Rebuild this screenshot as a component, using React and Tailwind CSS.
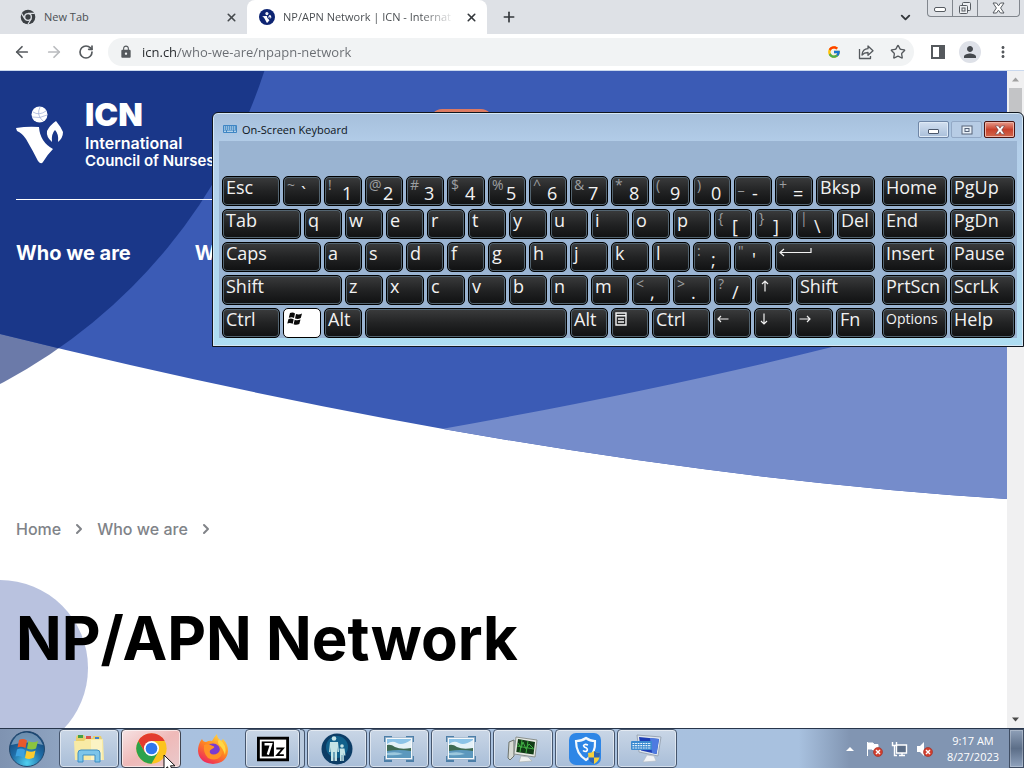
import React from "react";
import { ArrowLeft, ArrowRight, ChevronDown, ChevronRight, Plus, RotateCw, Star, X } from "lucide-react";
import { MdLock, MdPerson, MdMoreVert } from "react-icons/md";
import { FcGoogle } from "react-icons/fc";

/* ---------- Browser chrome ---------- */

function ChromeMark({ className }) {
  return (
    <svg viewBox="0 0 48 48" className={className} aria-hidden="true">
      <circle cx="24" cy="24" r="22" fill="#fcc31e" />
      <path d="M24 24 L4.9 13 A22 22 0 0 1 43.1 13 L24 13 Z" fill="#e33b2e" />
      <path d="M4.9 13 A22 22 0 0 0 24 46 L33.5 29.5 L24 24 L14.5 29.5 Z" fill="#2ba24c" />
      <path d="M4.9 13 L14.5 29.5 L24 24 L24 13 Z" fill="#e33b2e" />
      <circle cx="24" cy="24" r="11" fill="#fff" />
      <circle cx="24" cy="24" r="8.5" fill="#2f77ee" />
    </svg>
  );
}

function ChromeMono({ className }) {
  return (
    <svg viewBox="0 0 48 48" className={className} aria-hidden="true">
      <circle cx="24" cy="24" r="22" fill="#3c4044" />
      <path d="M24 13H44M14.500 29.500 4.500 13M33.500 29.500 24 46" stroke="#dee1e6" strokeWidth="3.500" />
      <circle cx="24" cy="24" r="12" fill="#dee1e6" />
      <circle cx="24" cy="24" r="8" fill="#3c4044" />
    </svg>
  );
}

function IcnMark({ className }) {
  return (
    <svg viewBox="0 0 48 58" className={className} aria-hidden="true">
      <circle cx="23.500" cy="8.500" r="8" fill="#fff" />
      <path d="M17 6 Q23 10 30 5 M24 1 Q20 9 27 15 M16 11 Q24 13 31 9" fill="none" stroke="#9aa9d4" strokeWidth=".7" />
      <path d="M0 22 Q12 20 23 21 Q24 36 37 43 Q31 49 27 56 Q25 59 22 55 Q17 45 10 33 Q6 27 1 25 Z" fill="#fff" />
      <path d="M40 15 Q45 21 47 26 Q47 32 42 36 Q43 28 39 24 Q35 28 36 36 Q30 31 31 25 Q34 19 40 15 Z" fill="#fff" />
    </svg>
  );
}

function TabStrip() {
  return (
    <div className="flex h-[34px] shrink-0 bg-[#dee1e6] text-xs">
      <div className="flex w-[247px] items-center pr-2 pl-5">
        <ChromeMono className="size-4" />
        <span className="ml-2 flex-1 text-[11px] text-[#4b4f54]">New Tab</span>
        <button aria-label="Close New Tab" className="flex size-4 items-center justify-center text-[#45494d]">
          <X size={13} strokeWidth={3} />
        </button>
      </div>
      <div className="flex w-[240px] items-center rounded-t-lg bg-white pr-2 pl-3">
        <span className="flex size-4 items-center justify-center rounded-full bg-[#0d2472]">
          <IcnMark className="h-[11px] w-[10px]" />
        </span>
        <span className="ml-2 flex-1 overflow-hidden bg-linear-[90deg,#45494d_80%,#ffffff_100%] bg-clip-text text-[11px] whitespace-nowrap text-transparent">
          NP/APN Network | ICN - Internat
        </span>
        <button aria-label="Close NP/APN Network" className="ml-2 flex size-4 items-center justify-center text-[#33373b]">
          <X size={13} strokeWidth={3} />
        </button>
      </div>
      <button aria-label="New tab" className="ml-3 flex w-5 items-center justify-center text-[#33373b]">
        <Plus size={16} strokeWidth={2.500} />
      </button>
      <button aria-label="Search tabs" className="mr-3 ml-auto flex w-5 items-center justify-center text-[#33373b]">
        <ChevronDown size={15} strokeWidth={3} />
      </button>
      <div className="mr-1 flex h-[17px] w-[93px] overflow-hidden rounded-b border border-t-0 border-[#81868d] text-[#565b61]">
        <button aria-label="Minimize" className="flex w-[25px] items-center justify-center border-r border-[#81868d]">
          <svg viewBox="0 0 14 12" className="h-3 w-[14px]" fill="#fff" stroke="currentColor"><rect x="1.500" y="5.500" width="11" height="4" rx="1.500" /></svg>
        </button>
        <button aria-label="Restore" className="flex w-[25px] items-center justify-center border-r border-[#81868d]">
          <svg viewBox="0 0 14 14" className="size-[14px]" fill="#eef0f3" stroke="currentColor"><rect x="4.500" y="1.500" width="8" height="8" rx="1" /><rect x="1.500" y="4.500" width="8" height="8" rx="1" /><rect x="4" y="7" width="3" height="3" /></svg>
        </button>
        <button aria-label="Close window" className="flex flex-1 items-center justify-center">
          <svg viewBox="0 0 13 12" className="h-3 w-[13px]" fill="#fff" stroke="currentColor"><path d="M1 1h3.500l2 2.800 2-2.800H12L8.600 6 12 11H8.500l-2-2.800-2 2.800H1L4.400 6Z" /></svg>
        </button>
      </div>
    </div>
  );
}

function Toolbar() {
  return (
    <div className="flex h-[37px] shrink-0 items-center border-b border-[#c9d8ee] bg-white pr-3 pl-3 text-[#55595d]">
      <button aria-label="Back" className="flex size-5 items-center justify-center"><ArrowLeft size={18} strokeWidth={2.300} /></button>
      <button aria-label="Forward" className="ml-3 flex size-5 items-center justify-center text-[#b9bbbe]"><ArrowRight size={18} strokeWidth={2.300} /></button>
      <button aria-label="Reload" className="ml-3 flex size-5 items-center justify-center"><RotateCw size={16} strokeWidth={2.500} /></button>
      <div className="ml-3 flex h-7 flex-1 items-center rounded-full bg-[#f1f3f4] pr-2 pl-[11px]">
        <MdLock size={14} />
        <input
          aria-label="Address"
          defaultValue="icn.ch/who-we-are/npapn-network"
          className="ml-[9px] min-w-0 flex-1 bg-linear-[90deg,#25282c_36px,#676b70_36px] bg-clip-text pt-[2px] text-[13px] text-transparent outline-none"
        />
        <button aria-label="Search with Google"><FcGoogle size={14} /></button>
        <button aria-label="Share" className="ml-4">
          <svg viewBox="0 0 18 18" className="size-[18px]" fill="none" stroke="currentColor" strokeWidth="1.300" strokeLinejoin="round">
            <path d="M2.500 6v9.500h11V13M5 12c.4-4.300 2.800-6.200 6-6.300V3l5 4.700-5 4.600V9.500C8.500 9.500 6.500 10.200 5 12Z" />
          </svg>
        </button>
        <button aria-label="Bookmark" className="ml-[15px]"><Star size={16} /></button>
      </div>
      <button aria-label="Side panel" className="ml-4">
        <svg viewBox="0 0 16 16" className="size-4"><path d="M1 1h14v14H1Z M3 3v10h6V3Z" fillRule="evenodd" fill="currentColor" /></svg>
      </button>
      <button aria-label="Profile" className="ml-[13px] flex size-[22px] items-center justify-center rounded-full bg-[#dee1e8] text-[#45494e]"><MdPerson size={18} /></button>
      <button aria-label="Menu" className="ml-[13px]"><MdMoreVert size={18} /></button>
    </div>
  );
}

/* ---------- Web page ---------- */

function Backdrop() {
  return (
    <svg viewBox="0 0 1007 657" preserveAspectRatio="none" className="absolute inset-0 size-full" aria-hidden="true">
      <defs>
        <clipPath id="hero"><path d="M0 0H1007V428Q545 398 0 263Z" /></clipPath>
      </defs>
      <circle cx="-252" cy="-168" r="543" fill="#6b7aa9" />
      <g clipPath="url(#hero)">
        <rect width="1007" height="440" fill="#3b5bb5" />
        <path d="M436 359Q660 319 832 276Q930 248 1007 220V440H436Z" fill="#758ccb" />
        <circle cx="-252" cy="-168" r="543" fill="#1a3789" />
      </g>
      <rect x="430" y="38" width="63" height="36" rx="12" fill="#dd7a62" />
      <circle cx="0" cy="597" r="88" fill="#b9c2df" />
    </svg>
  );
}

function WebPage() {
  return (
    <div className="flex min-h-0 flex-1 bg-white">
      <main className="relative min-w-0 flex-1 overflow-hidden font-['Inter',sans-serif]">
        <Backdrop />
        <div className="relative px-4">
          <header className="text-white">
            <a href="#home" className="flex items-start gap-[21px] border-b border-white pt-[29px] pb-[29px]">
              <IcnMark className="mt-[6px] h-[58px] w-12" />
              <span className="block">
                <span className="block text-[32px] leading-[30px] font-black">ICN</span>
                <span className="mt-1 block text-base leading-[18px] font-semibold">International</span>
                <span className="block text-[15px] leading-[18px] font-semibold">Council of Nurses</span>
              </span>
            </a>
            <nav className="mt-[37px] flex gap-16 text-xl leading-8 font-bold whitespace-nowrap">
              <a href="#who">Who we are</a>
              <a href="#work">W</a>
            </nav>
          </header>
          <nav aria-label="Breadcrumb" className="mt-[244px] flex items-center gap-[10px] text-base leading-8 font-medium text-[#808388]">
            <a href="#home">Home</a>
            <ChevronRight size={16} strokeWidth={3} />
            <a href="#who">Who we are</a>
            <ChevronRight size={16} strokeWidth={3} />
          </nav>
          <h1 className="mt-[55px] text-[60px] leading-[76px] font-bold whitespace-nowrap text-black">NP/APN Network</h1>
        </div>
      </main>
      <div className="flex w-[17px] shrink-0 flex-col items-center bg-[#f0f0f1]" aria-hidden="true">
        <svg viewBox="0 0 17 17" className="size-[17px]"><path d="M5 10.500 8.500 6.500 12 10.500Z" fill="#a0a0a0" /></svg>
        <div className="h-36 w-[13px] bg-[#c3c4c6]" />
        <svg viewBox="0 0 17 17" className="mt-auto size-[17px]"><path d="M5 6.500h7L8.500 10.500Z" fill="#4a4a4a" /></svg>
      </div>
    </div>
  );
}

/* ---------- On-screen keyboard ---------- */

const ENTER = <svg viewBox="0 0 34 12" className="mt-1 h-3 w-[34px]" fill="none" stroke="currentColor" strokeWidth="1.200"><path d="M32 1V5.500H1M5 2 1 5.500 5 9" /></svg>;
const arrow = (d) => (
  <svg viewBox="0 0 12 12" className="mt-1 size-3" fill="none" stroke="currentColor" strokeWidth="1.200"><path d={d} /></svg>
);
const UP = arrow("M6 11.500V1M3 4 6 1 9 4");
const DOWN = arrow("M6 .5V11M3 8 6 11 9 8");
const LEFT = arrow("M11.500 6H1M4 3 1 6 4 9");
const RIGHT = arrow("M.5 6H11M8 3 11 6 8 9");
const WINKEY = (
  <svg viewBox="0 0 16 14" className="mt-[3px] h-[14px] w-4" fill="#0a0a0a">
    <path d="M3 1Q6 0 8 1.500L7 6Q5 4.800 1.800 5.800ZM9 2Q12 3 15 1.500L13.800 6Q11 7.500 8 6.500ZM1.500 7Q4 6 6.700 7.300L5.700 11.800Q3 10.500 .3 11.500ZM7.700 7.800Q10.500 9 13.500 7.500L12.300 12Q9.500 13.500 6.600 12.300Z" />
  </svg>
);
const MENUKEY = (
  <svg viewBox="0 0 12 14" className="mt-[3px] h-[14px] w-3" fill="none" stroke="currentColor" strokeWidth="1.400"><path d="M1 1h10v12H1ZM1 3.800h10M3 7h6M3 10h6" /></svg>
);

const k = (label, width = "w-[38px]", extra = {}) => ({ label, width, ...extra });
const s = (upper, label) => ({ upper, label, width: "w-[38px]" });
const letters = (str) => str.split("").map((c) => k(c));

const ROWS = [
  [k("Esc", "flex-1"), s("~", "`"), s("!", "1"), s("@", "2"), s("#", "3"), s("$", "4"), s("%", "5"), s("^", "6"), s("&", "7"), s("*", "8"), s("(", "9"), s(")", "0"), s("_", "-"), s("+", "="), k("Bksp", "w-[59px]")],
  [k("Tab", "flex-1"), ...letters("qwertyuiop"), s("{", "["), s("}", "]"), s("|", "\\"), k("Del")],
  [k("Caps", "flex-1"), ...letters("asdfghjkl"), s(":", ";"), s('"', "'"), k(ENTER, "w-[100px]", { name: "Enter" })],
  [k("Shift", "flex-1"), ...letters("zxcvbnm"), s("<", ","), s(">", "."), s("?", "/"), k(UP, "w-[38px]", { name: "Up" }), k("Shift", "w-[79px]")],
  [k("Ctrl", "w-[58px]"), k(WINKEY, "w-[38px]", { name: "Windows", pressed: true }), k("Alt"), k("", "flex-1", { name: "Space" }), k("Alt"), k(MENUKEY, "w-[38px]", { name: "Context menu" }), k("Ctrl", "w-[58px]"), k(LEFT, "w-[38px]", { name: "Left" }), k(DOWN, "w-[38px]", { name: "Down" }), k(RIGHT, "w-[38px]", { name: "Right" }), k("Fn", "w-[39px]")],
];
const SIDE = ["Home", "PgUp", "End", "PgDn", "Insert", "Pause", "PrtScn", "ScrLk", "Options", "Help"];

function Key({ label, upper, width, name, pressed }) {
  const face = pressed
    ? "bg-white text-black inset-ring inset-ring-white"
    : "bg-linear-to-b from-[#3b3c3d] via-[#222324] to-[#101112] text-[#f2f2f2] inset-ring inset-ring-[#536470]";
  return (
    <button aria-label={name} className={`flex h-[30px] min-w-0 rounded-[5px] border border-black pl-[3px] text-left ${width} ${face}`}>
      {upper ? (
        <>
          <span className="w-3 text-sm leading-4 text-[#9c9fa1]">{upper}</span>
          <span className="pt-1 pl-[2px] text-lg leading-6">{label}</span>
        </>
      ) : (
        <span className={label === "Options" ? "text-sm leading-5" : "text-lg leading-5"}>{label}</span>
      )}
    </button>
  );
}

function OnScreenKeyboard() {
  return (
    <section
      aria-label="On-Screen Keyboard"
      className="absolute top-28 right-0 w-[812px] rounded-t-md border border-[#10161f] bg-linear-to-b from-[#a6bfdc] via-[#b4cfea] via-15% to-[#aeddf2] inset-ring inset-ring-[#d5e8f6]"
    >
      <div className="flex h-7 items-center pr-2 pl-[10px]">
        <svg viewBox="0 0 14 8" className="mt-1 h-2 w-[14px]" aria-hidden="true">
          <rect width="14" height="8" rx="1" fill="#3f86c4" />
          <path d="M1 2h12M1 4h12" stroke="#e6f3fb" strokeDasharray="1.300 .7" />
          <path d="M1 6.200h2M4 6.200h6M11 6.200h2" stroke="#e6f3fb" />
        </svg>
        <h2 className="ml-[5px] flex-1 pt-[6px] text-[11px] text-[#0c1420]">On-Screen Keyboard</h2>
        <div className="mt-[5px] flex gap-[2px]">
          <button aria-label="Minimize keyboard" className="flex h-[17px] w-[31px] items-end justify-center rounded-[2px] border border-[#6f86a6] bg-linear-to-b from-[#d3e0f0] to-[#a9bfda] pb-[3px] inset-ring inset-ring-[#dfeaf6]">
            <span className="block h-[5px] w-[11px] rounded-[1px] border border-[#4a576b] bg-white" />
          </button>
          <button aria-label="Maximize keyboard" className="flex h-[17px] w-[31px] items-center justify-center rounded-[2px] border border-[#93a9c6] bg-[#b7cce5]">
            <svg viewBox="0 0 12 10" className="h-[10px] w-3" fill="#e8f0f8" stroke="#566378"><rect x="1" y="1" width="10" height="8" /><rect x="4" y="3.500" width="4" height="3" /></svg>
          </button>
          <button aria-label="Close keyboard" className="flex h-[17px] w-[31px] items-center justify-center rounded-[2px] border border-[#4c1512] bg-linear-to-b from-[#e69a8b] via-[#c8412c] to-[#d0664c] inset-ring inset-ring-[#eeb3a6]">
            <svg viewBox="0 0 13 12" className="h-[10px] w-3" fill="#fff" stroke="#5b3c44" strokeWidth=".7"><path d="M1 1h3.500l2 2.800 2-2.800H12L8.600 6 12 11H8.500l-2-2.800-2 2.800H1L4.400 6Z" /></svg>
          </button>
        </div>
      </div>
      <div className="mx-[6px] mb-2 flex gap-[7px] bg-[#9ab4d2] pt-[35px] pr-[2px] pl-[3px]">
        <div className="flex min-w-0 flex-1 flex-col gap-[3px]">
          {ROWS.map((row, i) => (
            <div key={i} className="flex gap-[3px]">
              {row.map((key, j) => <Key key={j} {...key} />)}
            </div>
          ))}
        </div>
        <div className="grid w-[133px] grid-cols-2 gap-[3px]">
          {SIDE.map((label) => <Key key={label} label={label} width="w-full" />)}
        </div>
      </div>
    </section>
  );
}

/* ---------- Taskbar ---------- */

const Picture = () => (
  <svg viewBox="0 0 32 28" className="h-7 w-8">
    <path d="M1 1h8v6H1ZM23 1h8v6H23ZM1 21h8v6H1ZM23 21h8v6H23Z" fill="#4d7fa8" />
    <rect x="2.500" y="2.500" width="27" height="22" fill="#f4f8fa" stroke="#8aa9c4" strokeWidth=".6" />
    <rect x="4" y="4" width="24" height="19" fill="#8cc3e8" />
    <path d="M4 9Q9 5 14 8T28 5V14H4Z" fill="#e4f1f8" />
    <path d="M4 10Q8 9 12 12Q18 15 28 13V17H4Z" fill="#3f6a53" />
    <path d="M4 16Q16 14 28 16V23H4Z" fill="#5c98bd" />
    <path d="M4 18Q14 16 20 19Q12 21 4 20Z" fill="#9cc8dd" />
  </svg>
);

const Explorer = () => (
  <svg viewBox="0 0 34 32" className="h-8 w-[34px]">
    <path d="M4 5Q4 2 7 2h5l1 3h8V3h8l1 3V27H3Z" fill="#e9cf6e" />
    <path d="M6 2h5v3H6Z" fill="#43a047" /><path d="M14 3h5v3h-5Z" fill="#d9534a" /><path d="M23 4h4v3h-4Z" fill="#3e7fd0" />
    <path d="M2 8h10l2-2h17l1 21H3Z" fill="#f8eaa5" />
    <path d="M19 7h11v20H19Z" fill="#fbf3c4" />
    <path d="M6 29V20Q6 17 9 17H25Q28 17 28 20V29H23V22H11V29Z" fill="#7cc5ea" stroke="#3c8fc4" />
  </svg>
);

const Firefox = () => (
  <svg viewBox="0 0 32 32" className="size-8">
    <defs>
      <linearGradient id="fx" x1=".8" y1="0" x2=".2" y2="1"><stop offset="0" stopColor="#ffe14a" /><stop offset=".45" stopColor="#ff8a1f" /><stop offset="1" stopColor="#ed1f62" /></linearGradient>
    </defs>
    <path d="M5 6Q6 9 9 9Q13 7 15 8Q17 4 20 1Q20 5 24 8L26 6Q31 11 31 18Q30 30 16 31Q2 30 1 18Q1 11 5 6Z" fill="url(#fx)" />
    <circle cx="16" cy="18" r="7.500" fill="#7a3bd0" />
    <path d="M7 12Q11 10 16 13Q19 14 15 16Q12 17 13 20Q16 23 21 20Q24 17 22 12Q27 17 24 23Q19 29 11 25Q6 20 7 12Z" fill="#ff9226" />
    <path d="M22 6Q31 12 28 22Q26 15 22 12Q20 9 22 6Z" fill="#ffd744" />
  </svg>
);

const SevenZip = () => (
  <svg viewBox="0 0 34 26" className="h-[26px] w-8">
    <rect x="1.500" y="1.500" width="31" height="23" fill="#fff" stroke="#000" strokeWidth="3" />
    <rect x="5" y="5" width="13" height="16" fill="#000" />
    <path d="M8 8H15L11.500 19" fill="none" stroke="#fff" strokeWidth="2.500" />
    <path d="M20.500 12.500H27.500L21.500 19.500H28.500" fill="none" stroke="#000" strokeWidth="2" />
  </svg>
);

const Family = () => (
  <svg viewBox="0 0 32 32" className="size-8">
    <circle cx="16" cy="16" r="15.500" fill="#0c3d66" /><circle cx="16" cy="14" r="11" fill="#12618c" />
    <g fill="#c5e4e6">
      <circle cx="13" cy="5.500" r="2.300" /><path d="M9 9h8l1 10h-1.500l-.5-5V28h-2.500V19h-1V28H10V14l-.5 5H8Z" />
      <circle cx="21" cy="13" r="1.800" /><path d="M18.500 15.500h5l1 7h-1.300l-.4-3V28h-1.500V22h-.6V28H19V19Z" />
    </g>
  </svg>
);

const Monitor = () => (
  <svg viewBox="0 0 32 30" className="h-[30px] w-8">
    <path d="M2 8 7 6V22L3 26 1 24Z" fill="#d7dad4" stroke="#6d736d" />
    <path d="M9 3 30 6 28 23 7 20Z" fill="#e5e8e2" stroke="#8b918d" />
    <path d="M11 5 28 8 26.500 20.500 9.300 18Z" fill="#123c16" />
    <path d="M11 9 14 14 16 8 19 15 22 10 26 14M10 12 27 15M15 6 13 18M21 7 19 19" stroke="#3fae43" fill="none" />
    <path d="M14 22 21 23 25 27 12 28Z" fill="#eef0ee" stroke="#a8aca8" strokeWidth=".6" />
  </svg>
);

const Shield = () => (
  <svg viewBox="0 0 32 32" className="size-8">
    <rect width="32" height="32" rx="7" fill="#2e86e6" />
    <path d="M7 8Q13 8 17 5Q21 8 26 8Q27 21 17 27Q7 21 7 8Z" fill="none" stroke="#f2f8fd" strokeWidth="2.200" />
    <path d="M19 12Q15 10.500 14.500 12.800Q15 14.500 17.500 15Q19.500 17 17 18.500Q15 18.500 14 17.500" fill="none" stroke="#fff" strokeWidth="1.600" />
    <path d="M19 20Q23 20 25 18Q27 20 31 20Q31 28 25 31Q19 28 19 20Z" fill="#f5cf3c" />
    <path d="M25 18Q27 20 31 20L30.700 24.500H25ZM19.300 24.500H25V31Q20 29 19.300 24.500Z" fill="#2c64b4" />
  </svg>
);

const KeyboardApp = () => (
  <svg viewBox="0 0 34 30" className="h-[30px] w-[34px]">
    <path d="M7 1 31 3 28 22 9 18Z" fill="#dfe6ee" stroke="#9aa6b5" />
    <path d="M9 3 29 5 26.500 20 11 16.500Z" fill="#1e3fb5" /><path d="M20 4 29 5 26.500 20 22 19Z" fill="#4e7ae0" />
    <path d="M17 21 24 22 26 27 13 28Z" fill="#f1f3f5" stroke="#b5bcc5" strokeWidth=".6" />
    <rect x="1" y="7" width="21" height="9" rx="1" fill="#3b8ad0" />
    <path d="M2.500 9.500H21M2.500 11.700H21M2.500 14H21" stroke="#e9f5fc" strokeWidth="1.200" strokeDasharray="1.800 .8" />
  </svg>
);

const APPS = [
  { name: "File Explorer", icon: <Explorer /> },
  { name: "Google Chrome", icon: <ChromeMark className="size-[33px]" />, active: true },
  { name: "Firefox", icon: <Firefox />, flat: true },
  { name: "7-Zip", icon: <SevenZip />, stacked: true },
  { name: "Accessibility", icon: <Family /> },
  { name: "Picture viewer 1", icon: <Picture /> },
  { name: "Picture viewer 2", icon: <Picture /> },
  { name: "System monitor", icon: <Monitor /> },
  { name: "Security", icon: <Shield /> },
  { name: "On-Screen Keyboard", icon: <KeyboardApp /> },
];

function frameFor(app) {
  if (app.flat) return "border-transparent";
  if (app.active) return "border-[#3f4450] bg-linear-to-br from-[#f6e3e4] via-[#efb9b8] to-[#e9c9cb] inset-ring inset-ring-white/60";
  return "border-[#46566d] bg-linear-to-b from-[#c9d6e6] to-[#a9bed8] inset-ring inset-ring-white/50";
}

const BadX = () => <><circle cx="12" cy="11" r="4.500" fill="#d2402f" stroke="#a32a20" strokeWidth=".6" /><path d="M10 9 14 13M14 9 10 13" stroke="#fff" strokeWidth="1.400" /></>;

function Taskbar() {
  return (
    <footer className="flex h-10 shrink-0 items-stretch border-t border-[#27354b] bg-linear-[90deg,#7f93b1_0%,#8fa4c1_6%,#a9c1df_12%,#a8c1df_78%,#8195b2_83%,#8195b2_100%]">
      <button aria-label="Start" className="flex w-[54px] items-center justify-center">
        <svg viewBox="0 0 38 38" className="size-[38px]">
          <defs>
            <radialGradient id="orb" cx=".5" cy=".9" r=".9"><stop offset="0" stopColor="#4fd0f0" /><stop offset=".5" stopColor="#1f6ca6" /><stop offset="1" stopColor="#123e6c" /></radialGradient>
          </defs>
          <circle cx="19" cy="19" r="17.500" fill="url(#orb)" stroke="#23486d" />
          <path d="M3 15Q8 2 19 2.500T35 15Q20 10 3 15Z" fill="#b6cadc" opacity=".55" />
          <path d="M11 10Q15 8 19 10.500L17.500 18Q13 16 9.500 17.500Z" fill="#e8592c" />
          <path d="M20.500 11Q25 13.500 30 11L28 18.500Q23.500 20.500 19 18.500Z" fill="#8bc43f" />
          <path d="M9 19.500Q13 17.500 17 20L15.500 27.500Q11 25 7.500 26.500Z" fill="#3ca1e0" />
          <path d="M18.500 20.500Q23 23 27.500 20.500L26 27.500Q21.500 30 17 28Z" fill="#fccb2e" />
        </svg>
      </button>
      <div className="ml-[5px] flex gap-[2px]">
        {APPS.map((app) => (
          <button key={app.name} aria-label={app.name} className="relative flex w-[60px]">
            <span className={`flex flex-1 items-center justify-center rounded-sm border ${frameFor(app)}`}>{app.icon}</span>
            {app.stacked && <span className="w-[5px] rounded-r-sm border border-l-0 border-[#46566d] bg-[#b9cade]" />}
            {app.active && (
              <svg viewBox="0 0 14 20" className="absolute top-[25px] left-[42px] h-5 w-[14px]"><path d="M1 1V16L4.500 12.800 7 18.500 10 17.200 7.500 11.800H12Z" fill="#fff" stroke="#111" /></svg>
            )}
          </button>
        ))}
      </div>
      <div className="ml-auto flex items-center gap-2">
        <button aria-label="Show hidden icons"><svg viewBox="0 0 8 6" className="h-[6px] w-2"><path d="M0 5 4 1 8 5Z" fill="#fff" /></svg></button>
        <button aria-label="Action center" className="ml-1"><svg viewBox="0 0 17 16" className="h-4 w-[17px]"><path d="M1.500 1V15M2 2H7L8 3.500H12V9H7L6 8H2Z" fill="#fff" stroke="#fff" /><BadX /></svg></button>
        <button aria-label="Network"><svg viewBox="0 0 17 16" className="h-4 w-[17px]" fill="none" stroke="#fff" strokeWidth="1.400"><path d="M5.500 4H15.500V12H5.500ZM8 14.500H14M11 12V14" fill="#5d6f88" /><path d="M1.500 1V4.500H5.500V1M3.500 4.500V14.500H6" /></svg></button>
        <button aria-label="Volume"><svg viewBox="0 0 17 16" className="h-4 w-[17px]"><path d="M1 5H4L8 1V15L4 11H1Z" fill="#fff" /><BadX /></svg></button>
        <time className="ml-1 w-[56px] text-center text-[11px] leading-4 whitespace-nowrap text-white">9:17 AM<br />8/27/2023</time>
        <button aria-label="Show desktop" className="h-full w-[15px] border border-[#3f4d63] bg-linear-to-b from-[#8fa0b8] via-[#5c6e88] to-[#8fa2bd] inset-ring inset-ring-white/25" />
      </div>
    </footer>
  );
}

export default function App() {
  return (
    <div className="relative flex h-screen flex-col overflow-hidden font-['Open_Sans',sans-serif]">
      <TabStrip />
      <Toolbar />
      <WebPage />
      <OnScreenKeyboard />
      <Taskbar />
    </div>
  );
}
